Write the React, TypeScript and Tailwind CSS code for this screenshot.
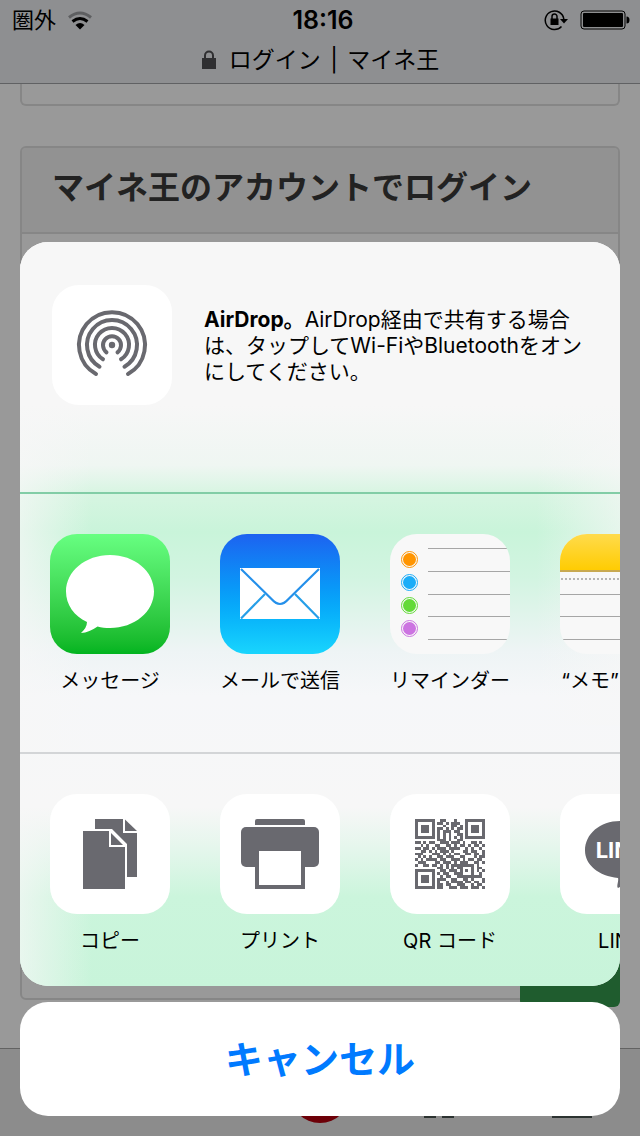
import type { ReactNode } from 'react';

type ShareItem = { label: string; tile: string; icon: ReactNode };

const QR_ROWS = [
  '1111111001100010001111111',
  '1000001011010111001000001',
  '1011101000100110101011101',
  '1011101011010101101011101',
  '1011101010111011001011101',
  '1000001010101001101000001',
  '1111111010101010101111111',
  '0000000011101001100000000',
  '1101011001110111010011010',
  '0010100110011010110101101',
  '1101101011101111001010010',
  '0011010101110100011011001',
  '1110001110101011001101101',
  '0101010011011100110001011',
  '1010111101100111010110110',
  '0111000110111010111001101',
  '1001101101010111111110100',
  '0000000011010101100010110',
  '1111111001101110101010101',
  '1000001010110011100010010',
  '1011101001011001111111110',
  '1011101011100110011010001',
  '1011101010010111101101101',
  '1000001011011001110010110',
  '1111111011001110111011101',
];

const QR_PATH = QR_ROWS.map((row, y) =>
  [...row].map((cell, x) => (cell === '1' ? `M${x} ${y}h1v1h-1z` : '')).join('')
).join('');

const shareApps: ShareItem[] = [
  {
    label: 'メッセージ',
    tile: 'bg-linear-to-b from-[#67ff81] to-[#01b41f]',
    icon: (
      <svg viewBox="0 0 120 120" className="w-full h-full" fill="#fff">
        <path d="M60 21c24.500 0 44 16.300 44 36.500S84.500 94 60 94c-4.500 0-8.500-.5-12.500-1.500C42.500 96 36.500 99 31 99c3.500-3 6-7 6-11C24 82 16 70.500 16 57.500 16 37.300 35.500 21 60 21z" />
      </svg>
    ),
  },
  {
    label: 'メールで送信',
    tile: 'bg-linear-to-b from-[#1d62f0] to-[#19d5fd]',
    icon: (
      <svg viewBox="0 0 120 120" className="w-full h-full" fill="none">
        <rect x="20" y="34" width="80" height="51" fill="#fff" />
        <path d="M21 35l31 30.500q8 9 16 0L99 35" stroke="#2590ea" strokeWidth="2.200" />
        <path d="M21 84.500L45 60M99 84.500L75 60" stroke="#279fe8" strokeWidth="2.200" />
      </svg>
    ),
  },
  {
    label: 'リマインダー',
    tile: 'bg-[#f8f8f8]',
    icon: (
      <svg viewBox="0 0 120 120" className="w-full h-full" fill="none">
        <path d="M38 14.500h82M38 37.500h82M38 60.500h82M38 82.500h82M38 105.500h82" stroke="#a6a6a6" />
        {['#ff9500', '#1badf8', '#63da38', '#cc73e1'].map((color, i) => (
          <g key={color}>
            <circle cx="19.500" cy={25.5 + i * 23} r="8" stroke={color} />
            <circle cx="19.500" cy={25.5 + i * 23} r="6.500" fill={color} />
          </g>
        ))}
      </svg>
    ),
  },
  {
    label: '“メモ”に追加',
    tile: 'bg-[#f8f8f8]',
    icon: (
      <svg viewBox="0 0 120 120" className="w-full h-full" fill="none">
        <defs>
          <linearGradient id="memo" x1="0" y1="0" x2="0" y2="1">
            <stop stopColor="#ffdb4c" />
            <stop offset="1" stopColor="#ffcc02" />
          </linearGradient>
        </defs>
        <rect width="120" height="36" fill="url(#memo)" />
        <path d="M0 37h120" stroke="#c8a951" strokeWidth="2" />
        <path d="M1 45h119" stroke="#b5b5b5" strokeWidth="2" strokeDasharray="2 2" />
        <path d="M0 60.500h120M0 82.500h120M0 105.500h120" stroke="#a6a6a6" />
      </svg>
    ),
  },
];

const shareActions: ShareItem[] = [
  {
    label: 'コピー',
    tile: 'bg-white',
    icon: (
      <svg viewBox="0 0 120 120" className="w-full h-full" fill="#69696f">
        <path d="M45 25h28v14h14v44H77V50L62 35H45z" />
        <path d="M75 25.500L87 37H75z" />
        <path d="M33 37h26v16h16v42H33z" />
        <path d="M61 39l12 12H61z" />
      </svg>
    ),
  },
  {
    label: 'プリント',
    tile: 'bg-white',
    icon: (
      <svg viewBox="0 0 120 120" className="w-full h-full" fill="#69696f">
        <path d="M35 31v-4q0-2 2-2h46q2 0 2 2v4z" />
        <rect x="21" y="33" width="78" height="40" rx="5" />
        <rect x="35" y="55" width="50" height="40" />
        <rect x="39" y="57" width="42" height="34" fill="#fff" />
      </svg>
    ),
  },
  {
    label: 'QR コード',
    tile: 'bg-white',
    icon: (
      <svg viewBox="0 0 25 25" className="size-[70px]" fill="#69696f" shapeRendering="crispEdges">
        <path d={QR_PATH} />
      </svg>
    ),
  },
  {
    label: 'LINE',
    tile: 'bg-white',
    icon: (
      <svg viewBox="0 0 120 120" className="w-full h-full" fill="#69696f">
        <path d="M60 27c20 0 35 13 35 29.500C95 72 72 88 58 94c-2-1 1-7 0-10-19-2-33-13-33-27.500C25 40 40 27 60 27z" />
        <text x="60" y="64" textAnchor="middle" fill="#fff" fontSize="22" fontWeight="700" fontFamily="Inter, sans-serif">LINE</text>
      </svg>
    ),
  },
];

function ShareRow({ items }: { items: ShareItem[] }) {
  return (
    <div className="flex gap-[50px] pl-[30px] pt-10 overflow-hidden">
      {items.map(item => (
        <button key={item.label} type="button" className="w-[120px] shrink-0 flex flex-col items-center gap-3">
          <span className={`size-[120px] rounded-[27px] overflow-hidden flex items-center justify-center ${item.tile}`}>
            {item.icon}
          </span>
          <span className="text-[20px] leading-[30px] whitespace-nowrap">{item.label}</span>
        </button>
      ))}
    </div>
  );
}

function StatusBar() {
  return (
    <div className="h-10 pl-3 pr-[10px] grid grid-cols-3 items-center">
      <div className="flex items-center gap-3 text-[22px] leading-7">
        圏外
        <svg viewBox="0 0 24 19" className="w-6 h-[19px]" fill="none" strokeWidth="3">
          <path d="M1 6.500Q12-2.500 23 6.500" stroke="#5e5f61" />
          <path d="M4.500 10.500Q12 4.500 19.500 10.500" stroke="#000" />
          <path d="M12 18.500L7.500 14Q12 10 16.500 14z" fill="#000" />
        </svg>
      </div>
      <div className="text-center text-[25px] leading-7 font-semibold pl-1">18:16</div>
      <div className="flex items-center justify-end gap-3">
        <svg viewBox="0 0 24 22" className="w-6 h-[22px]" fill="none" stroke="#000" strokeWidth="1.500">
          <path d="M17.500 17.500A9.300 9.300 0 1 1 19.800 10" />
          <path d="M16 10h8l-4 4.500z" fill="#000" stroke="none" />
          <rect x="6.500" y="9.500" width="8" height="6.500" fill="#000" stroke="none" />
          <path d="M8 10V7.500a2.500 2.500 0 0 1 5 0V10" />
        </svg>
        <svg viewBox="0 0 50 20" className="w-[50px] h-5">
          <rect x="1" y="1" width="44" height="18" rx="3" fill="none" stroke="#000" />
          <rect x="3" y="3" width="40" height="14" rx="1" />
          <path d="M46.500 6.500q3 0 3 3.500t-3 3.500z" />
        </svg>
      </div>
    </div>
  );
}

function BrowserPage() {
  return (
    <div className="min-h-screen flex flex-col bg-[#999999]">
      <header className="bg-[#8e8f91] border-b border-[#606163]">
        <StatusBar />
        <div className="h-[43px] pb-[3px] flex items-center justify-center gap-3 text-[23px] leading-8">
          <svg viewBox="0 0 16 20" className="w-4 h-5">
            <rect x="1" y="8" width="14" height="11" fill="#2f2f31" />
            <path d="M4 9V5.500a4 4 0 0 1 8 0V9" fill="none" stroke="#2f2f31" strokeWidth="2" />
          </svg>
          <span>ログイン<span className="px-[3px]"> | </span>マイネ王</span>
        </div>
      </header>

      <main className="flex-1 flex flex-col px-5 pb-12">
        <div className="h-[22px] border-2 border-t-0 border-[#868686] rounded-b-md" />
        <section className="mt-10 flex-1 flex flex-col border-2 border-[#868686] rounded-md">
          <h1 className="h-[86px] px-[30px] flex items-center bg-[#929292] border-b-2 border-[#868686] rounded-t-sm text-[32px] leading-10 font-bold text-[#222222]">
            <span className="pb-1 whitespace-nowrap">マイネ王のアカウントでログイン</span>
          </h1>
          <div className="mt-auto flex justify-end -mr-[2px] -mb-[9px]">
            <div className="w-[100px] h-20 bg-[#1f5c2e] rounded-md" />
          </div>
        </section>
      </main>

      <nav className="h-[88px] px-[38px] flex items-center justify-between bg-[#8c8c8c] border-t border-[#626262]">
        <div className="size-[60px]" />
        <div className="size-[60px]" />
        <div className="size-[60px] rounded-full bg-[#6d0008]" />
        <svg viewBox="0 0 60 50" className="w-[60px] h-[50px]" fill="none" stroke="#2c3331" strokeWidth="2">
          <path d="M9 4h10v45H9zM27 4h10v45H27z" />
        </svg>
        <svg viewBox="0 0 60 50" className="w-[60px] h-[50px]" fill="none" stroke="#2c3331" strokeWidth="2">
          <path d="M11 4h38v45H11z" />
        </svg>
      </nav>
    </div>
  );
}

export default function App() {
  return (
    <div className="relative min-h-screen text-black font-[Inter,'Noto_Sans_CJK_JP',sans-serif]" lang="ja">
      <BrowserPage />

      {/* Share sheet */}
      <div className="absolute inset-0 p-5 flex flex-col justify-end gap-4" role="dialog" aria-label="共有">
        <div className="rounded-[28px] overflow-hidden bg-[#f7f7f7]">
          <div className="bg-[linear-gradient(90deg,#f7f7f7b0,#f7f7f700_12%),linear-gradient(270deg,#f7f7f7a0,#f7f7f700_14%),linear-gradient(180deg,#f7f7f7_0,#f7f7f7_22%,#eff6f2_30%,#d6f5e1_34%,#c9f4da_39%,#d2f4e1_45%,#eef4f5_55%,#f6f7f9_61%,#f7f7f7_76%,#e3f6eb_82%,#cbf5dc_88%,#c8f4da_100%)] bg-[length:100%_100%,100%_65%,100%_100%] bg-no-repeat">
            <button type="button" className="w-full h-[252px] px-8 pt-[43px] flex gap-8 text-left border-b-2 border-[#82cda6]">
              <span className="size-[120px] shrink-0 rounded-[27px] bg-white flex">
                <svg viewBox="0 0 120 120" className="w-full h-full" fill="none" stroke="#69696f" strokeWidth="4" strokeLinecap="round">
                  <circle cx="60" cy="60" r="3.200" fill="#69696f" stroke="none" />
                  <path d="M54.500 67.300A9 9 0 1 1 65.500 67.300" />
                  <path d="M51 74.300A17 17 0 1 1 69 74.300" />
                  <path d="M47.500 81.700A25 25 0 1 1 72.500 81.700" />
                  <path d="M44 89A33 33 0 1 1 76 89" />
                </svg>
              </span>
              <span className="pt-[22px] text-[21px] leading-[26px]">
                <b className="font-bold">AirDrop。</b>AirDrop経由で共有する場合は、タップしてWi-FiやBluetoothをオンにしてください。
              </span>
            </button>
            <div className="h-[260px] border-b-2 border-[#d3d5d7]">
              <ShareRow items={shareApps} />
            </div>
            <div className="h-[232px]">
              <ShareRow items={shareActions} />
            </div>
          </div>
        </div>
        <button type="button" className="h-[114px] shrink-0 rounded-[28px] bg-white text-[38px] leading-[48px] font-bold text-[#007aff]">
          キャンセル
        </button>
      </div>
    </div>
  );
}
